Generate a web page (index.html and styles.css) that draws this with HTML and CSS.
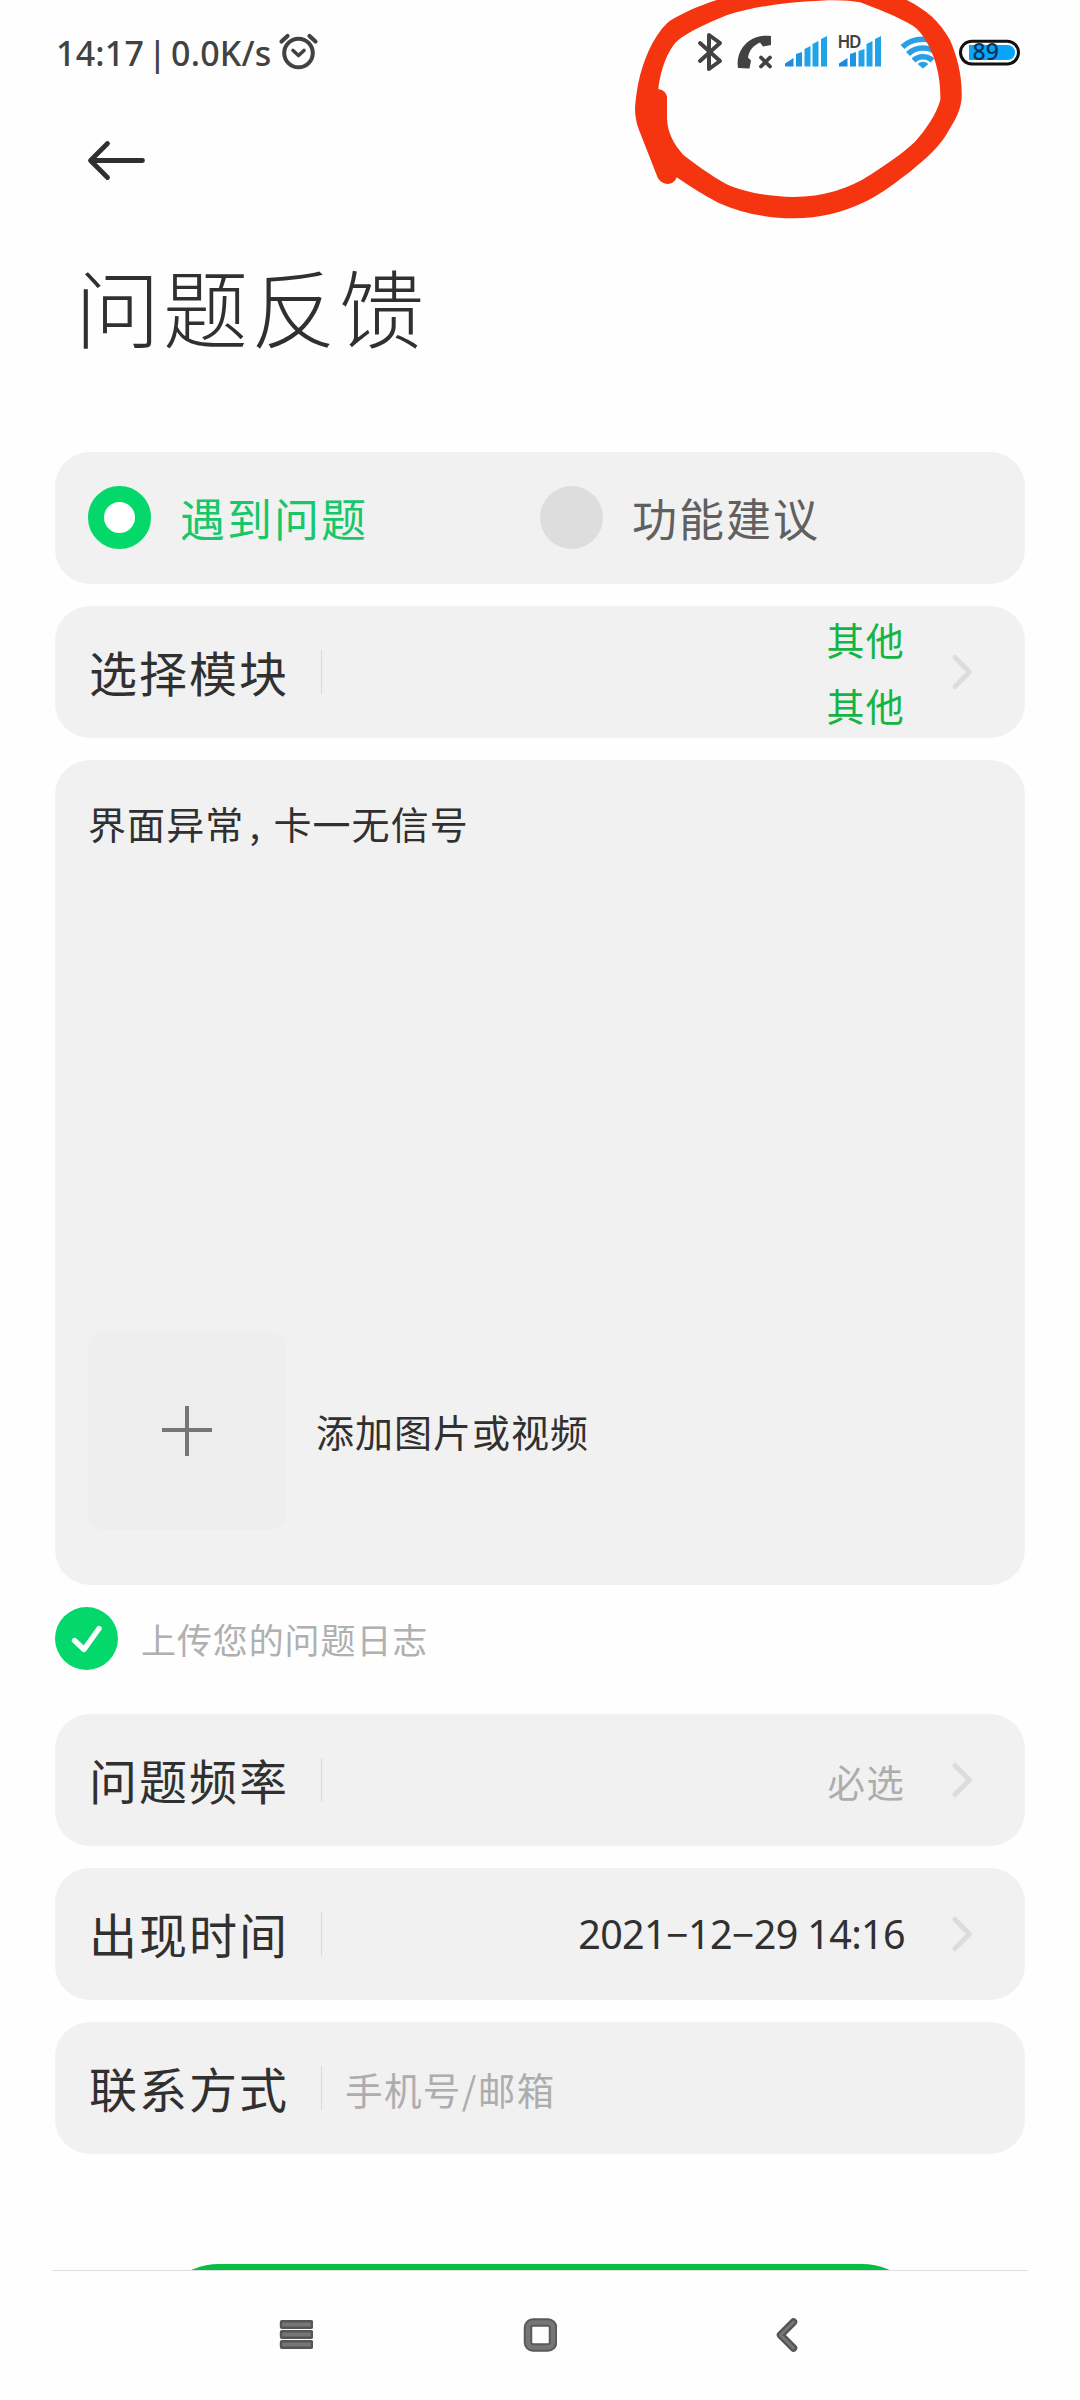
FILE: index.html
```html
<!DOCTYPE html>
<html lang="zh-CN">
<head>
<meta charset="utf-8">
<title>问题反馈</title>
<link rel="stylesheet" href="styles.css">
</head>
<body>
<div class="screen">
  <header class="status">
    <span class="status-text">14:17 | 0.0K/s</span>
    <svg class="alarm" viewBox="278 30 42 42" width="42" height="42" fill="none" stroke="#424242" stroke-linecap="round" stroke-linejoin="round">
      <circle cx="298.500" cy="53" r="14.300" stroke-width="4"/>
      <path d="M281.500 41.500l6-5.500M315.500 41.500l-6-5.500" stroke-width="4.200"/>
      <path d="M293 50.500l5.500 5 5.500-5" stroke-width="3.600"/>
    </svg>
    <div class="status-icons">
      <svg viewBox="690 20 40 60" width="40" height="60" fill="none" stroke="#424242" stroke-width="4" stroke-linecap="round" stroke-linejoin="round">
        <path d="M700 43l20 18-11 8V35l11 8-20 18"/>
      </svg>
      <svg viewBox="730 20 50 60" width="50" height="60">
        <path d="M738 68c-2-12 4-22 11-27 7-5 14-6 22-5v9l-8 1.500-3-4c-7 3-11 8-12 15l3 3-1.500 8z" fill="#424242"/>
        <path d="M761 57.500l9 9M770 57.500l-9 9" stroke="#424242" stroke-width="3.800" stroke-linecap="round"/>
      </svg>
      <svg viewBox="780 20 52 60" width="52" height="60">
        <path d="M785 66.500v-3l8.500-5.500v8.500z" fill="#1b8be0"/>
        <path d="M796 66.500V54l6-2v14.500z" fill="#1c95e4"/>
        <path d="M804.500 66.500V49l6-3v20.500zM812.500 66.500V44l6-3v25.500zM821 66.500V39l6-3v30.500z" fill="#20a3e8"/>
      </svg>
      <svg viewBox="832 20 60 60" width="60" height="60">
        <path d="M839 66.500v-3l8.500-5.500v8.500z" fill="#1b8be0"/>
        <path d="M850 66.500V54l6-2v14.500z" fill="#1c95e4"/>
        <path d="M858.500 66.500V51l6-2v17.500zM866.500 66.500V44l6-3v25.500zM875 66.500V39l6-3v30.500z" fill="#20a3e8"/>
        <text class="hd" x="837.500" y="48" textLength="24">HD</text>
      </svg>
      <svg viewBox="892 20 58 60" width="58" height="60" fill="none" stroke="#289fe6" stroke-width="5.500">
        <path d="M902.500 47c10-10.500 31-10.500 41 0M908 54c8-8 22-8 30 0M913.500 60.500c5-5 14-5 19 0"/>
        <path d="M917.500 64q5.500-4.500 11 0l-5.500 4.500z" fill="#289fe6" stroke="none"/>
      </svg>
      <svg viewBox="950 20 80 60" width="80" height="60">
        <rect x="960.500" y="41.200" width="58" height="22.800" rx="11.400" fill="#fff" stroke="#111" stroke-width="3"/>
        <path d="M969 45h39q7 1 7 7.500t-7 7.500h-39z" fill="#08a5fb"/>
        <text class="charge" x="972.500" y="59.500">89</text>
      </svg>
    </div>
  </header>

  <nav class="topbar">
    <svg viewBox="84 136 64 48" width="64" height="48" fill="none" stroke="#303030" stroke-width="4.800" stroke-linecap="round" stroke-linejoin="round">
      <path d="M142.500 160.500H91M107.500 143.500l-17 17 17 17"/>
    </svg>
  </nav>
  <h1 class="title">问题反馈</h1>

  <main class="form">
    <section class="card options">
      <div class="option active"><i class="radio"></i><span>遇到问题</span></div>
      <div class="option"><i class="radio"></i><span>功能建议</span></div>
    </section>

    <section class="card row">
      <span class="label">选择模块</span>
      <div class="value module"><span>其他</span><span>其他</span></div>
      <svg class="chevron" viewBox="0 0 24 38" width="24" height="38"><path d="M4 4.500L18.500 19 4 33.500"/></svg>
    </section>

    <section class="card details">
      <p class="description">界面异常<span class="comma">,</span>卡一无信号</p>
      <div class="attach">
        <div class="add">
          <svg viewBox="0 0 50 50" width="50" height="50" stroke="#767676" stroke-width="4"><path d="M0 24h50M25 0v50"/></svg>
        </div>
        <span>添加图片或视频</span>
      </div>
    </section>

    <div class="log">
      <svg viewBox="0 0 63 63" width="63" height="63">
        <circle cx="31.500" cy="31.500" r="31.500" fill="#04d86a"/>
        <path d="M19.500 33.500l9.500 9L44 21.500" fill="none" stroke="#fff" stroke-width="5.400" stroke-linecap="round" stroke-linejoin="round"/>
      </svg>
      <span>上传您的问题日志</span>
    </div>

    <section class="card row">
      <span class="label">问题频率</span>
      <div class="value hint">必选</div>
      <svg class="chevron" viewBox="0 0 24 38" width="24" height="38"><path d="M4 4.500L18.500 19 4 33.500"/></svg>
    </section>
    <section class="card row">
      <span class="label">出现时间</span>
      <div class="value date">2021−12−29 14:16</div>
      <svg class="chevron" viewBox="0 0 24 38" width="24" height="38"><path d="M4 4.500L18.500 19 4 33.500"/></svg>
    </section>
    <section class="card row">
      <span class="label">联系方式</span>
      <div class="contact hint">手机号/邮箱</div>
    </section>
  </main>

  <div class="submit-clip"><div class="submit"></div></div>
  <footer class="navbar">
    <svg viewBox="0 0 34 34" width="34" height="34" fill="#767676" stroke="#555" stroke-width="2.400">
      <rect x="2" y="3.200" width="31" height="6.600" rx="1"/><rect x="2" y="13.200" width="31" height="6.600" rx="1"/><rect x="2" y="23.200" width="31" height="6.600" rx="1"/>
    </svg>
    <svg viewBox="0 0 34 34" width="34" height="34" fill="none">
      <rect x="5" y="4.500" width="25" height="25" rx="5" stroke="#5a5a5a" stroke-width="8.500"/>
      <rect x="5" y="4.500" width="25" height="25" rx="5" stroke="#767676" stroke-width="4.500"/>
    </svg>
    <svg viewBox="0 0 34 34" width="34" height="34" fill="none" stroke-linecap="round" stroke-linejoin="round">
      <path d="M26.500 4L13.500 17l13 13" stroke="#555" stroke-width="7.500"/>
      <path d="M26.500 4L13.500 17l13 13" stroke="#767676" stroke-width="3"/>
    </svg>
  </footer>

  <svg class="scribble" viewBox="0 0 1260 690" width="420" height="230">
    <path fill="#f53410" fill-rule="evenodd" d="M290 0C235 18 190 38 150 62C125 82 112 105 98 128C65 190 50 255 45 325C45 350 50 370 55 385L110 525C118 556 160 562 170 532C210 560 250 585 295 608C365 640 445 655 520 655C600 655 670 637 740 603C790 577 830 545 870 515C920 475 965 435 990 385C1015 345 1027 315 1025 275C1025 225 1012 170 990 120C960 65 920 30 860 0L860 -60L290 -60ZM720 7C760 22 830 48 880 78C910 100 930 140 944 180C955 215 962 250 961 300C948 345 920 385 885 425C845 463 800 492 750 525C690 564 610 591 520 591C440 589 370 576 320 553C270 525 230 495 190 465C160 430 143 400 141 355V290C137 275 125 268 115 268C120 220 140 150 175 120C205 97 250 75 320 46C400 20 500 6 600 2C650 -1 690 1 720 7Z"/>
  </svg>
</div>
</body>
</html>
```
FILE: styles.css
```css
* { box-sizing: border-box; }

body {
  margin: 0;
  background: #fefefe;
  color: #303030;
  font-family: "Noto Sans CJK SC", "Noto Sans", sans-serif;
}

.screen {
  position: relative;
  display: flex;
  flex-direction: column;
  width: 1080px;
  height: 2400px;
  overflow: hidden;
}

svg { display: block; flex: none; }

.status {
  display: flex;
  height: 100px;
  padding: 0 50px 0 56px;
}

.status-text {
  width: 222px;
  margin-top: 31px;
  font: 500 34px/44px "Noto Sans", sans-serif;
  letter-spacing: 0.2px;
  word-spacing: -5px;
  color: #424242;
  white-space: nowrap;
}

.alarm { margin-top: 30px; }

.status-icons { display: flex; margin: 20px 0 0 auto; }

.hd { font: 600 17px "Noto Sans", sans-serif; fill: #424242; }

.charge { font: 500 23px "Noto Sans", sans-serif; fill: #0b3352; }

.topbar { height: 120px; padding: 36px 84px; }

.title {
  height: 180px;
  margin: 0;
  padding: 25px 0 0 75px;
  font-size: 85px;
  font-weight: 300;
  line-height: 120px;
  letter-spacing: 3px;
}

.form {
  display: flex;
  flex-direction: column;
  gap: 22px;
  padding: 52px 55px 0;
}

.card {
  height: 132px;
  border-radius: 35px;
  background: #f1f1f1;
}

.options { display: flex; padding-left: 33px; }

.option {
  display: flex;
  align-items: center;
  gap: 29px;
  width: 452px;
  padding-bottom: 1px;
  font-size: 45px;
  letter-spacing: 2px;
  color: #606060;
}

.radio {
  width: 63px;
  height: 63px;
  border-radius: 50%;
  background: #ddd;
}

.active { color: #18c76a; }

.active .radio { border: 16px solid #04d86a; background: #fff; }

.row { display: flex; align-items: center; padding: 0 50px 0 34px; }

.label {
  width: 233px;
  height: 44px;
  border-right: 1px solid #d8d8d8;
  font-size: 48px;
  line-height: 42px;
  letter-spacing: 2px;
  white-space: nowrap;
}

.value { margin-left: auto; margin-right: 46px; font-size: 38px; letter-spacing: 1.300px; }

.module {
  display: flex;
  flex-direction: column;
  padding-bottom: 1px;
  line-height: 66px;
  color: #15b444;
}

.chevron {
  fill: none;
  stroke: #dcdcdc;
  stroke-width: 5;
  stroke-linecap: round;
  stroke-linejoin: round;
}

.details {
  display: flex;
  flex-direction: column;
  justify-content: space-between;
  height: 825px;
  padding: 35px 33px 55px;
}

.description { margin: 0; font-size: 38px; line-height: 56px; letter-spacing: 1.100px; }

.comma { display: inline-block; width: 29px; padding-left: 5px; }

.attach {
  display: flex;
  align-items: center;
  gap: 30px;
  font-size: 38px;
  letter-spacing: 1px;
}

.attach > span { padding-bottom: 2px; }

.add {
  display: flex;
  align-items: center;
  justify-content: center;
  width: 198px;
  height: 198px;
  padding-bottom: 1px;
  border-radius: 16px;
  background: #eee;
}

.log {
  display: flex;
  align-items: center;
  gap: 23px;
  height: 63px;
  margin-bottom: 22px;
  font-size: 35px;
  letter-spacing: 0.900px;
  color: #b0b0b0;
}

.log span { padding-bottom: 1px; }

.hint { font-size: 37.500px; color: #adadad; }

.date { font-family: "Noto Sans", sans-serif; font-size: 39.500px; letter-spacing: -0.650px; }

.contact { margin-left: 23px; letter-spacing: 1.400px; }

.submit-clip {
  height: 7px;
  margin: 110px 52px 0;
  overflow: hidden;
  border-bottom: 1px solid #dedede;
}

.submit {
  width: 775px;
  height: 132px;
  margin: 0 auto;
  border-radius: 66px;
  background: #04bf40;
}

.navbar {
  display: flex;
  justify-content: center;
  gap: 210px;
  padding-top: 47px;
}

.scribble { position: absolute; left: 620px; top: 0; }
```
